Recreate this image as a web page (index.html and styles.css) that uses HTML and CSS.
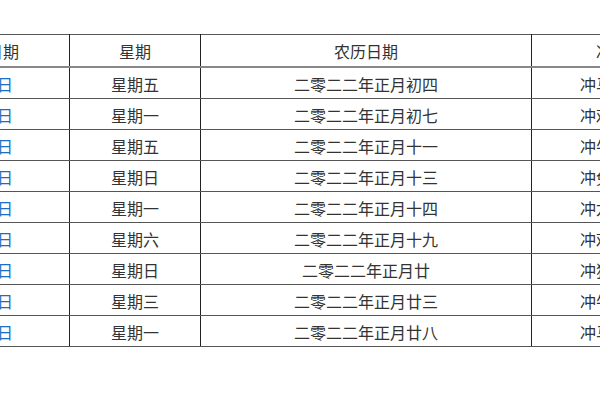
FILE: index.html
```html
<!DOCTYPE html>
<html lang="zh-CN">
<head>
<meta charset="utf-8">
<title>日期表</title>
<link rel="stylesheet" href="styles.css">
</head>
<body>
<div class="page">
  <table class="cal">
    <colgroup>
      <col class="c-date"><col class="c-week"><col class="c-lunar"><col class="c-clash">
    </colgroup>
    <thead>
      <tr><th class="d">日期</th><th>星期</th><th>农历日期</th><th class="c">冲煞</th></tr>
    </thead>
    <tbody>
      <tr><td class="d"><a href="#">2022年2月4日</a></td><td>星期五</td><td>二零二二年正月初四</td><td class="c">冲马煞南</td></tr>
      <tr><td class="d"><a href="#">2022年2月7日</a></td><td>星期一</td><td>二零二二年正月初七</td><td class="c">冲鸡煞西</td></tr>
      <tr><td class="d"><a href="#">2022年2月11日</a></td><td>星期五</td><td>二零二二年正月十一</td><td class="c">冲牛煞西</td></tr>
      <tr><td class="d"><a href="#">2022年2月13日</a></td><td>星期日</td><td>二零二二年正月十三</td><td class="c">冲兔煞东</td></tr>
      <tr><td class="d"><a href="#">2022年2月14日</a></td><td>星期一</td><td>二零二二年正月十四</td><td class="c">冲龙煞北</td></tr>
      <tr><td class="d"><a href="#">2022年2月19日</a></td><td>星期六</td><td>二零二二年正月十九</td><td class="c">冲鸡煞西</td></tr>
      <tr><td class="d"><a href="#">2022年2月20日</a></td><td>星期日</td><td>二零二二年正月廿</td><td class="c">冲狗煞南</td></tr>
      <tr><td class="d"><a href="#">2022年2月23日</a></td><td>星期三</td><td>二零二二年正月廿三</td><td class="c">冲牛煞西</td></tr>
      <tr><td class="d"><a href="#">2022年2月28日</a></td><td>星期一</td><td>二零二二年正月廿八</td><td class="c">冲马煞南</td></tr>
    </tbody>
  </table>
</div>
</body>
</html>
```

FILE: styles.css
```css
html, body {
  margin: 0;
  padding: 0;
  background: #ffffff;
}
.page {
  width: 600px;
  height: 400px;
  overflow: hidden;
  padding-top: 34px;
  box-sizing: border-box;
}
.cal {
  margin-left: -231px;
  border-collapse: collapse;
  table-layout: fixed;
  width: 922px;
  font-family: "Noto Sans CJK SC", "Noto Sans", sans-serif;
  font-size: 16px;
  color: #333333;
}
.c-date { width: 300px; }
.c-week { width: 131px; }
.c-lunar { width: 331px; }
.c-clash { width: 160px; }
.cal th, .cal td {
  padding: 0;
  text-align: center;
  font-weight: normal;
  border-left: 1px solid #222222;
  border-right: 1px solid #222222;
  border-bottom: 1px solid #555555;
  line-height: 20px;
  white-space: nowrap;
  overflow: hidden;
}
.cal th {
  height: 31px;
  border-top: 1px solid #555555;
  border-bottom: 2px solid #888888;
}
.cal td {
  height: 29px;
  padding-top: 1px;
}
.cal td.d {
  text-align: right;
  padding-right: 56px;
}
.cal th.d {
  text-align: right;
  padding-right: 50px;
}
.cal td.c {
  text-align: left;
  padding-left: 48px;
}
.cal th.c {
  text-align: left;
  padding-left: 64px;
}
.cal a {
  color: #1a6fc4;
  text-decoration: none;
}
```
